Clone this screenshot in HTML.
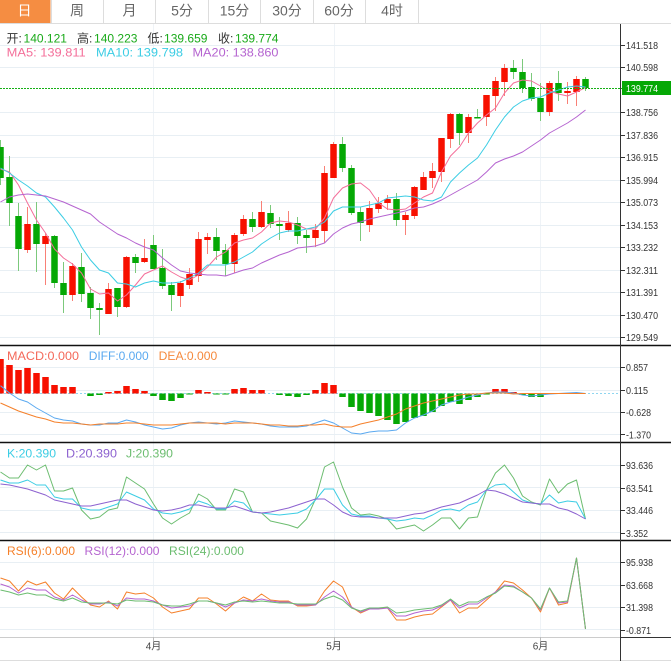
<!DOCTYPE html>
<html lang="zh">
<head>
<meta charset="utf-8">
<title>K线图</title>
<style>
html,body{margin:0;padding:0;background:#fff;width:671px;height:661px;overflow:hidden}
svg{display:block;position:absolute;left:0;top:0;filter:blur(.25px)}
text{font-family:"Liberation Sans","Noto Sans CJK SC",sans-serif}
.tab{font-size:14px;fill:#666;text-anchor:middle}
.l{font-size:12px}
.a{font-size:10px;fill:#333}
.x{font-size:10px;fill:#444;text-anchor:middle}
polyline{fill:none;stroke-width:1;stroke-linejoin:round}
</style>
</head>
<body>
<svg width="671" height="661" viewBox="0 0 671 661" xmlns="http://www.w3.org/2000/svg">
<!-- tabs -->
<rect x="0" y="0" width="50.5" height="23" fill="#f58d42"/>
<path d="M51.5 0V23M103.5 0V23M155.5 0V23M208.5 0V23M260.5 0V23M313.5 0V23M365.5 0V23M418.5 0V23" stroke="#ddd" fill="none"/>
<path d="M0 23.5H671" stroke="#ddd"/>
<text class="tab" x="24.5" y="15.5" style="fill:#fff">日</text>
<text class="tab" x="77" y="15.5">周</text>
<text class="tab" x="129.5" y="15.5">月</text>
<text class="tab" x="182" y="15.5">5分</text>
<text class="tab" x="234.5" y="15.5">15分</text>
<text class="tab" x="287" y="15.5">30分</text>
<text class="tab" x="339" y="15.5">60分</text>
<text class="tab" x="392" y="15.5">4时</text>

<!-- grid -->
<path d="M153.5 24V637M334.5 24V637M540.5 24V637" stroke="#eff3f7" fill="none"/>
<path d="M0 45.5H620M0 67.5H620M0 112.5H620M0 135.5H620M0 157.5H620M0 180.5H620M0 202.5H620M0 225.5H620M0 247.5H620M0 270.5H620M0 292.5H620M0 315.5H620M0 337.5H620M0 367.5H620M0 390.5H620M0 412.5H620M0 434.5H620M0 465.5H620M0 487.5H620M0 510.5H620M0 532.5H620M0 562.5H620M0 585.5H620M0 607.5H620M0 629.5H620" stroke="#e8eff4" fill="none"/>

<!-- candles: wicks -->
<path fill="none" stroke="#7cc97c" d="M.5 140V185M9.5 156V226M18.5 203V271M36.5 202V272M54.5 235V288M63.5 262V313M81.5 253V302M90.5 287V319M99.5 303V335M117.5 288V317M135.5 254V273M153.5 235V269M162.5 249V289M171.5 282V311M216.5 228V260M225.5 244V276M252.5 212V232M270.5 205V228M279.5 217V240M297.5 217V244M306.5 230V253M342.5 137V172M351.5 165V215M360.5 207V241M396.5 193V226M459.5 113V145M477.5 109V118M513.5 60V79M522.5 59V93M531.5 73V101M540.5 83V121M558.5 71V101M585.5 77V91"/>
<path fill="none" stroke="#f98076" d="M27.5 207V253M45.5 233V285M72.5 263V301M108.5 283V314M126.5 256V308M144.5 239V263M180.5 281V307M189.5 268V289M198.5 232V282M207.5 233V254M234.5 233V273M243.5 215V236M261.5 201V228M288.5 211V232M315.5 224V247M324.5 166V243M333.5 142V178M369.5 201V232M378.5 197V213M387.5 195V210M405.5 212V235M414.5 186V219M423.5 172V190M432.5 163V188M441.5 138V182M450.5 113V148M468.5 114V143M486.5 95V126M495.5 77V111M504.5 64V96M549.5 81V116M567.5 82V104M576.5 76V106"/>
<!-- candles: bodies -->
<path fill="none" stroke="#05a805" stroke-width="6.5" d="M.5 147V178M9.5 177V203M18.5 216V249M36.5 224V244M54.5 236V283M63.5 283V295M81.5 267V294M90.5 293V308M99.5 308V310M117.5 288V307M135.5 257V263M153.5 245V269M162.5 268V286M171.5 285V295M216.5 237V251M225.5 250V264M252.5 219V227M270.5 213V224M279.5 224V226M297.5 223V236M306.5 235V238M342.5 144V168M351.5 168V213M360.5 212V223M396.5 199V220M459.5 114V133M477.5 117V118.5M513.5 68V72M522.5 72V88M531.5 87V99M540.5 98V112M558.5 83V93M585.5 79V88"/>
<path fill="none" stroke="#f71000" stroke-width="6.5" d="M27.5 224V250M45.5 236V244M72.5 266V295M108.5 289V314M126.5 257V307M144.5 258V262M180.5 283V296M189.5 274V285M198.5 239V276M207.5 237V240M234.5 235V264M243.5 219V234M261.5 212V227M288.5 223V230M315.5 230V238M324.5 173V231M333.5 144V178M369.5 208V225M378.5 203V209M387.5 199V203M405.5 215V220M414.5 187V216M423.5 177V190M432.5 171V178M441.5 138V172M450.5 114V139M468.5 117V133M486.5 95V117M495.5 81V96M504.5 68V82M549.5 83V112M567.5 91V93M576.5 79V92"/>

<!-- MA lines -->
<polyline stroke="#f46f9a" points=".5,169 9.5,172 18.5,185 27.5,203 36.5,220 45.5,233 54.5,249 63.5,258 72.5,264 81.5,273 90.5,289 99.5,294 108.5,293 117.5,301 126.5,295 135.5,285 144.5,274 153.5,270 162.5,266 171.5,272 180.5,277 189.5,280 198.5,275 207.5,267 216.5,257 225.5,252 234.5,243 243.5,240 252.5,238 261.5,232 270.5,223 279.5,221 288.5,222 297.5,225 306.5,229 315.5,229 324.5,218 333.5,198 342.5,188 351.5,184 360.5,183 369.5,190 378.5,203 387.5,209 396.5,210 405.5,209 414.5,203 423.5,197 432.5,193 441.5,172 450.5,156 459.5,147 468.5,133 477.5,123 486.5,115 495.5,108 504.5,93 513.5,83 522.5,80 531.5,81 540.5,86 549.5,91 558.5,94 567.5,96 576.5,92 585.5,87.5"/>
<polyline stroke="#3ccde4" points=".5,168 9.5,173 18.5,180 27.5,186 36.5,193 45.5,197 54.5,207 63.5,218 72.5,230 81.5,247 90.5,260 99.5,270 108.5,273 117.5,283 126.5,284 135.5,287 144.5,283 153.5,281 162.5,283 171.5,283 180.5,282 189.5,278 198.5,273 207.5,265 216.5,265 225.5,265 234.5,262 243.5,257 252.5,252 261.5,244 270.5,238 279.5,233 288.5,231 297.5,231 306.5,229 315.5,227 324.5,222 333.5,211 342.5,207 351.5,207 360.5,207 369.5,205 378.5,203 387.5,198 396.5,197 405.5,196 414.5,197 423.5,200 432.5,201 441.5,197 450.5,182 459.5,173 468.5,165 477.5,158 486.5,145 495.5,130 504.5,117 513.5,107 522.5,101 531.5,98 540.5,97 549.5,93 558.5,90 567.5,87 576.5,86 585.5,87"/>
<polyline stroke="#b564d0" points=".5,202 9.5,197 18.5,195 27.5,194 36.5,195 45.5,196 54.5,199 63.5,202 72.5,206 81.5,210 90.5,214 99.5,222 108.5,228 117.5,234 126.5,238 135.5,243 144.5,247 153.5,250 162.5,258 171.5,265 180.5,271 189.5,273 198.5,274 207.5,275 216.5,275 225.5,276 234.5,273 243.5,270 252.5,268 261.5,263 270.5,259 279.5,255 288.5,252 297.5,248 306.5,247 315.5,246 324.5,243 333.5,234 342.5,228 351.5,224 360.5,222 369.5,219 378.5,217 387.5,215 396.5,213 405.5,211 414.5,208 423.5,207 432.5,204 441.5,200 450.5,195 459.5,190 468.5,185 477.5,180 486.5,172 495.5,163 504.5,159 513.5,156 522.5,152 531.5,146 540.5,140 549.5,133 558.5,128 567.5,123 576.5,117 585.5,110"/>

<!-- price line -->
<path d="M0 88.5H622" stroke="#16b016" stroke-dasharray="2 1" fill="none"/>

<!-- MACD -->
<path d="M0 393.5H620" stroke="#8fd6f0" stroke-dasharray="2 2" fill="none"/>
<path fill="none" stroke="#f71000" stroke-width="6.5" d="M.5 359V393.5M9.5 365V393.5M18.5 370V393.5M27.5 368V393.5M36.5 373V393.5M45.5 377V393.5M54.5 385V393.5M63.5 387V393.5M72.5 387V393.5M108.5 392V393.5M117.5 391V393.5M126.5 386V393.5M135.5 389V393.5M144.5 391V393.5M198.5 390V393.5M207.5 392V393.5M234.5 389V393.5M243.5 388V393.5M252.5 390V393.5M261.5 390V393.5M315.5 390V393.5M324.5 383V393.5M333.5 385V393.5M495.5 389V393.5M504.5 389V393.5M513.5 392V393.5"/>
<path fill="none" stroke="#05a805" stroke-width="6.5" d="M90.5 393.5V396M99.5 393.5V395M153.5 393.5V396M162.5 393.5V400M171.5 393.5V401M180.5 393.5V398M189.5 393.5V394.5M216.5 393.5V394.5M225.5 393.5V394.5M279.5 393.5V395M288.5 393.5V396M297.5 393.5V397M306.5 393.5V395M342.5 393.5V397M351.5 393.5V407M360.5 393.5V411M369.5 393.5V413M378.5 393.5V416M387.5 393.5V420M396.5 393.5V424M405.5 393.5V422M414.5 393.5V418M423.5 393.5V416M432.5 393.5V412M441.5 393.5V406M450.5 393.5V402M459.5 393.5V404M468.5 393.5V400M477.5 393.5V397M486.5 393.5V394.5M522.5 393.5V395M531.5 393.5V397M540.5 393.5V397"/>
<polyline stroke="#5aa9f0" points=".5,385.7 9.5,393 18.5,399 27.5,402 36.5,408 45.5,413 54.5,418 63.5,420 72.5,421 81.5,424 90.5,425 99.5,425 108.5,423 117.5,423 126.5,420 135.5,422 144.5,425 153.5,427 162.5,429 171.5,428 180.5,425 189.5,423 198.5,422 207.5,423 216.5,424 225.5,423 234.5,421 243.5,422 252.5,423 261.5,424 270.5,426 279.5,427 288.5,427 297.5,427 306.5,426 315.5,423 324.5,420 333.5,423 342.5,428 351.5,433 360.5,434 369.5,432 378.5,431 387.5,431 396.5,430 405.5,423 414.5,418 423.5,415 432.5,411 441.5,405 450.5,402 459.5,400 468.5,397 477.5,395 486.5,393 495.5,392 504.5,392 513.5,393 522.5,395 531.5,396 540.5,395 549.5,394 558.5,393.5 567.5,393 576.5,392.5 585.5,393.5"/>
<polyline stroke="#f5802a" points=".5,403 9.5,407 18.5,411 27.5,414 36.5,417 45.5,419 54.5,422 63.5,423 72.5,423 81.5,424 90.5,425 99.5,424 108.5,424 117.5,424 126.5,423 135.5,423 144.5,424 153.5,425 162.5,425 171.5,425 180.5,424 189.5,423 198.5,423 207.5,423 216.5,423 225.5,424 234.5,423 243.5,423 252.5,423 261.5,424 270.5,425 279.5,425 288.5,426 297.5,426 306.5,425 315.5,425 324.5,424 333.5,426 342.5,427 351.5,427 360.5,424 369.5,422 378.5,420 387.5,417 396.5,414 405.5,409 414.5,406 423.5,403 432.5,401 441.5,399 450.5,397 459.5,395 468.5,394 477.5,394 486.5,393 495.5,393 504.5,393 513.5,394 522.5,393.5 585.5,393.5"/>

<!-- KDJ -->
<polyline stroke="#6cbd70" points=".5,472 9.5,478 18.5,478 27.5,465 36.5,470 45.5,465 54.5,491 63.5,491 72.5,488 81.5,510 90.5,519 99.5,517 108.5,510 117.5,508 126.5,477 135.5,483 144.5,489 153.5,504 162.5,518 171.5,524 180.5,518 189.5,513 198.5,494 207.5,499 216.5,510 225.5,510 234.5,489 243.5,492 252.5,512 261.5,513 270.5,521 279.5,523 288.5,525 297.5,528 306.5,519 315.5,499 324.5,467 333.5,462 342.5,487 351.5,508 360.5,515 369.5,514 378.5,516 387.5,519 396.5,529 405.5,527 414.5,525 423.5,531 432.5,525 441.5,518 450.5,518 459.5,529 468.5,518 477.5,517 486.5,490 495.5,473 504.5,465 513.5,478 522.5,496 531.5,502 540.5,505 549.5,479 558.5,493 567.5,484 576.5,480 585.5,519"/>
<polyline stroke="#3ccde4" points=".5,480 9.5,483 18.5,483 27.5,480 36.5,485 45.5,485 54.5,497 63.5,499 72.5,499 81.5,508 90.5,510 99.5,510 108.5,507 117.5,504 126.5,492 135.5,496 144.5,500 153.5,509 162.5,513 171.5,514 180.5,512 189.5,509 198.5,501 207.5,504 216.5,509 225.5,509 234.5,501 243.5,503 252.5,512 261.5,513 270.5,514 279.5,515 288.5,514 297.5,513 306.5,509 315.5,500 324.5,489 333.5,489 342.5,505 351.5,514 360.5,516 369.5,516 378.5,518 387.5,519 396.5,521 405.5,520 414.5,518 423.5,519 432.5,515 441.5,510 450.5,509 459.5,511 468.5,505 477.5,502 486.5,490 495.5,485 504.5,484 513.5,492 522.5,500 531.5,503 540.5,504 549.5,495 558.5,503 567.5,501 576.5,502 585.5,519"/>
<polyline stroke="#8d62d0" points=".5,484 9.5,485 18.5,487 27.5,489 36.5,492 45.5,495 54.5,500 63.5,502 72.5,504 81.5,506 90.5,506 99.5,504 108.5,502 117.5,500 126.5,500 135.5,504 144.5,507 153.5,510 162.5,511 171.5,510 180.5,508 189.5,505 198.5,505 207.5,507 216.5,508 225.5,508 234.5,506 243.5,509 252.5,512 261.5,513 270.5,512 279.5,510 288.5,508 297.5,505 306.5,502 315.5,499 324.5,499 333.5,505 342.5,512 351.5,516 360.5,517 369.5,517 378.5,518 387.5,518 396.5,518 405.5,516 414.5,514 423.5,513 432.5,510 441.5,507 450.5,505 459.5,503 468.5,499 477.5,495 486.5,490 495.5,491 504.5,494 513.5,498 522.5,502 531.5,503 540.5,504 549.5,504 558.5,508 567.5,510 576.5,514 585.5,519"/>

<!-- RSI -->
<polyline stroke="#f5802a" points=".5,578 9.5,581 18.5,591 27.5,581 36.5,585 45.5,582 54.5,593 63.5,599 72.5,588 81.5,597 90.5,605 99.5,607 108.5,601 117.5,609 126.5,592 135.5,594 144.5,593 153.5,598 162.5,607 171.5,613 180.5,611 189.5,609 198.5,598 207.5,598 216.5,604 225.5,611 234.5,603 243.5,597 252.5,601 261.5,594 270.5,600 279.5,601 288.5,601 297.5,606 306.5,606 315.5,605 324.5,591 333.5,581 342.5,587 351.5,607 360.5,613 369.5,609 378.5,608 387.5,608 396.5,620 405.5,620 414.5,617 423.5,615 432.5,614 441.5,607 450.5,600 459.5,613 468.5,608 477.5,608 486.5,600 495.5,592 504.5,581 513.5,583 522.5,590 531.5,598 540.5,612 549.5,588 558.5,605 567.5,603 576.5,558 585.5,629"/>
<polyline stroke="#b564d0" points=".5,584 9.5,587 18.5,593 27.5,588 36.5,590 45.5,590 54.5,597 63.5,600 72.5,595 81.5,600 90.5,604 99.5,604 108.5,602 117.5,606 126.5,598 135.5,599 144.5,599 153.5,601 162.5,605 171.5,608 180.5,607 189.5,606 198.5,601 207.5,601 216.5,603 225.5,607 234.5,603 243.5,600 252.5,601 261.5,599 270.5,601 279.5,602 288.5,602 297.5,605 306.5,605 315.5,605 324.5,597 333.5,591 342.5,597 351.5,607 360.5,612 369.5,609 378.5,609 387.5,608 396.5,616 405.5,616 414.5,613 423.5,611 432.5,610 441.5,606 450.5,600 459.5,608 468.5,604 477.5,604 486.5,598 495.5,592 504.5,585 513.5,586 522.5,592 531.5,598 540.5,610 549.5,588 558.5,603 567.5,602 576.5,558 585.5,629"/>
<polyline stroke="#6cbd70" points=".5,590 9.5,592 18.5,595 27.5,593 36.5,595 45.5,595 54.5,599 63.5,601 72.5,598 81.5,602 90.5,603 99.5,603 108.5,603 117.5,604 126.5,600 135.5,601 144.5,601 153.5,602 162.5,605 171.5,606 180.5,606 189.5,604 198.5,601 207.5,601 216.5,603 225.5,605 234.5,602 243.5,601 252.5,602 261.5,601 270.5,602 279.5,603 288.5,603 297.5,604 306.5,604 315.5,604 324.5,599 333.5,596 342.5,600 351.5,608 360.5,611 369.5,608 378.5,608 387.5,607 396.5,613 405.5,612 414.5,610 423.5,609 432.5,608 441.5,605 450.5,599 459.5,606 468.5,602 477.5,602 486.5,597 495.5,593 504.5,586 513.5,587 522.5,592 531.5,598 540.5,609 549.5,588 558.5,602 567.5,601 576.5,558 585.5,629"/>

<!-- separators -->
<path d="M0 345.5H671M0 442.5H671M0 540.5H671" stroke="#111" stroke-width="1.5" fill="none"/>
<path d="M0 637.5H620" stroke="#ccc" fill="none"/>
<path d="M0 660.5H671" stroke="#ddd" fill="none"/>
<path d="M620.5 637.5H671" stroke="#333" fill="none"/>
<path d="M620.5 24V661" stroke="#333" fill="none"/>
<path d="M153.5 637V641M334.5 637V641M540.5 637V641" stroke="#bbb" fill="none"/>
<path d="M620 45.5h5M620 67.5h5M620 112.5h5M620 135.5h5M620 157.5h5M620 180.5h5M620 202.5h5M620 225.5h5M620 247.5h5M620 270.5h5M620 292.5h5M620 315.5h5M620 337.5h5M620 367.5h5M620 390.5h5M620 412.5h5M620 434.5h5M620 465.5h5M620 488.5h5M620 510.5h5M620 533.5h5M620 562.5h5M620 585.5h5M620 607.5h5M620 630.5h5" stroke="#333" fill="none"/>

<!-- legends -->
<g class="l">
<text x="6.5" y="42.500" fill="#333" font-size="12">开:</text><text x="23.5" y="42.500" fill="#1aaa1a" font-size="12" textLength="43.5" lengthAdjust="spacingAndGlyphs">140.121</text>
<text x="77" y="42.500" fill="#333" font-size="12">高:</text><text x="94" y="42.500" fill="#1aaa1a" font-size="12" textLength="43.5" lengthAdjust="spacingAndGlyphs">140.223</text>
<text x="147.5" y="42.500" fill="#333" font-size="12">低:</text><text x="164" y="42.500" fill="#1aaa1a" font-size="12" textLength="43.5" lengthAdjust="spacingAndGlyphs">139.659</text>
<text x="218" y="42.500" fill="#333" font-size="12">收:</text><text x="235" y="42.500" fill="#1aaa1a" font-size="12" textLength="43.5" lengthAdjust="spacingAndGlyphs">139.774</text>
<text x="6.7" y="56.500" fill="#f46f9a" font-size="12" textLength="79" lengthAdjust="spacingAndGlyphs">MA5: 139.811</text>
<text x="96" y="56.500" fill="#3ccde4" font-size="12" textLength="87" lengthAdjust="spacingAndGlyphs">MA10: 139.798</text>
<text x="192.5" y="56.500" fill="#b564d0" font-size="12" textLength="86" lengthAdjust="spacingAndGlyphs">MA20: 138.860</text>
<text x="7" y="360" fill="#f4695a" font-size="12" textLength="72" lengthAdjust="spacingAndGlyphs">MACD:0.000</text>
<text x="88.7" y="360" fill="#5aa9f0" font-size="12" textLength="60" lengthAdjust="spacingAndGlyphs">DIFF:0.000</text>
<text x="158.7" y="360" fill="#f5893c" font-size="12" textLength="58.5" lengthAdjust="spacingAndGlyphs">DEA:0.000</text>
<text x="7" y="457.5" fill="#3ccde4" font-size="12" textLength="49" lengthAdjust="spacingAndGlyphs">K:20.390</text>
<text x="66" y="457.5" fill="#8d62d0" font-size="12" textLength="51" lengthAdjust="spacingAndGlyphs">D:20.390</text>
<text x="126" y="457.5" fill="#6cbd70" font-size="12" textLength="47" lengthAdjust="spacingAndGlyphs">J:20.390</text>
<text x="7" y="555" fill="#f5802a" font-size="12" textLength="68" lengthAdjust="spacingAndGlyphs">RSI(6):0.000</text>
<text x="84.5" y="555" fill="#b564d0" font-size="12" textLength="75" lengthAdjust="spacingAndGlyphs">RSI(12):0.000</text>
<text x="169" y="555" fill="#6cbd70" font-size="12" textLength="75" lengthAdjust="spacingAndGlyphs">RSI(24):0.000</text>
</g>

<!-- axis labels -->
<text class="a" x="626" y="49" textLength="32" lengthAdjust="spacingAndGlyphs">141.518</text>
<text class="a" x="626" y="71" textLength="32" lengthAdjust="spacingAndGlyphs">140.598</text>
<text class="a" x="626" y="116" textLength="32" lengthAdjust="spacingAndGlyphs">138.756</text>
<text class="a" x="626" y="139" textLength="32" lengthAdjust="spacingAndGlyphs">137.836</text>
<text class="a" x="626" y="161" textLength="32" lengthAdjust="spacingAndGlyphs">136.915</text>
<text class="a" x="626" y="184" textLength="32" lengthAdjust="spacingAndGlyphs">135.994</text>
<text class="a" x="626" y="206" textLength="32" lengthAdjust="spacingAndGlyphs">135.073</text>
<text class="a" x="626" y="229" textLength="32" lengthAdjust="spacingAndGlyphs">134.153</text>
<text class="a" x="626" y="251" textLength="32" lengthAdjust="spacingAndGlyphs">133.232</text>
<text class="a" x="626" y="274" textLength="32" lengthAdjust="spacingAndGlyphs">132.311</text>
<text class="a" x="626" y="296" textLength="32" lengthAdjust="spacingAndGlyphs">131.391</text>
<text class="a" x="626" y="319" textLength="32" lengthAdjust="spacingAndGlyphs">130.470</text>
<text class="a" x="626" y="341" textLength="32" lengthAdjust="spacingAndGlyphs">129.549</text>
<rect x="622" y="81" width="49" height="14" fill="#05a805"/>
<text class="a" x="626" y="92" style="fill:#fff" textLength="32" lengthAdjust="spacingAndGlyphs">139.774</text>
<text class="a" x="626" y="371" textLength="22" lengthAdjust="spacingAndGlyphs">0.857</text>
<text class="a" x="626" y="394" textLength="22" lengthAdjust="spacingAndGlyphs">0.115</text>
<text class="a" x="626" y="416" textLength="25" lengthAdjust="spacingAndGlyphs">-0.628</text>
<text class="a" x="626" y="438.500" textLength="25" lengthAdjust="spacingAndGlyphs">-1.370</text>
<text class="a" x="626" y="469" textLength="27" lengthAdjust="spacingAndGlyphs">93.636</text>
<text class="a" x="626" y="492" textLength="27" lengthAdjust="spacingAndGlyphs">63.541</text>
<text class="a" x="626" y="514" textLength="27" lengthAdjust="spacingAndGlyphs">33.446</text>
<text class="a" x="626" y="537" textLength="22" lengthAdjust="spacingAndGlyphs">3.352</text>
<text class="a" x="626" y="566" textLength="27" lengthAdjust="spacingAndGlyphs">95.938</text>
<text class="a" x="626" y="589" textLength="27" lengthAdjust="spacingAndGlyphs">63.668</text>
<text class="a" x="626" y="611" textLength="27" lengthAdjust="spacingAndGlyphs">31.398</text>
<text class="a" x="626" y="634" textLength="25" lengthAdjust="spacingAndGlyphs">-0.871</text>
<text class="x" x="153.5" y="649.500">4月</text>
<text class="x" x="334" y="649.500">5月</text>
<text class="x" x="540.5" y="649.500">6月</text>
</svg>
</body>
</html>
